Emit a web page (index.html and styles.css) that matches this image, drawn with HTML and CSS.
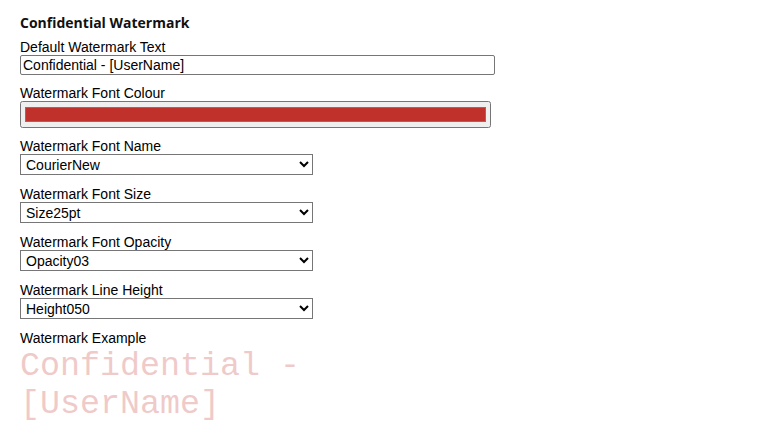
FILE: index.html
```html
<!DOCTYPE html>
<html>
<head>
<meta charset="utf-8">
<link rel="stylesheet" href="styles.css">
</head>
<body>
<div class="panel">
  <h3 class="title">Confidential Watermark</h3>
  <div class="field field-tight">
    <label class="lbl">Default Watermark Text</label>
    <input class="text-in" type="text" value="Confidential - [UserName]" spellcheck="true">
  </div>
  <div class="field field-tight">
    <label class="lbl">Watermark Font Colour</label>
    <input class="color-in" type="color" value="#c0312b">
  </div>
  <div class="field">
    <label class="lbl">Watermark Font Name</label>
    <select class="sel"><option>CourierNew</option></select>
  </div>
  <div class="field">
    <label class="lbl">Watermark Font Size</label>
    <select class="sel"><option>Size25pt</option></select>
  </div>
  <div class="field">
    <label class="lbl">Watermark Font Opacity</label>
    <select class="sel"><option>Opacity03</option></select>
  </div>
  <div class="field">
    <label class="lbl">Watermark Line Height</label>
    <select class="sel"><option>Height050</option></select>
  </div>
  <div class="field">
    <label class="lbl">Watermark Example</label>
    <div class="example">Confidential - [UserName]</div>
  </div>
</div>
</body>
</html>
```
FILE: styles.css
```css
html, body {
  margin: 0;
  padding: 0;
  background: #fff;
}
.panel {
  padding: 13px 20px 0 20px;
  font-family: "Liberation Sans", Arial, sans-serif;
  font-size: 14px;
  color: #000;
}
.title {
  font-family: "Open Sans", sans-serif;
  font-weight: 700;
  font-size: 14px;
  line-height: 20px;
  margin: 0 0 6px 0;
  color: #111;
}
.field {
  display: flex;
  flex-direction: column;
  align-items: flex-start;
  margin-bottom: 11px;
}
.field-tight {
  margin-bottom: 10px;
}
.lbl {
  display: block;
  line-height: 16px;
  height: 16px;
}
.text-in {
  box-sizing: border-box;
  width: 475px;
  height: 20px;
  margin: 0;
  padding: 0 2px;
  font-family: "Liberation Sans", Arial, sans-serif;
  font-size: 14px;
  border: 1px solid #767676;
  border-radius: 2px;
  color: #000;
}
.color-in {
  box-sizing: border-box;
  width: 471px;
  height: 27px;
  margin: 0;
}
.sel {
  box-sizing: border-box;
  width: 293px;
  height: 21px;
  margin: 0;
  padding-left: 1px;
  font-family: "Liberation Sans", Arial, sans-serif;
  font-size: 14px;
  color: #000;
  background: #fff;
}
.example {
  width: 292px;
  margin-top: 1px;
  font-family: "Liberation Mono", "Courier New", monospace;
  font-size: 33.33px;
  color: #c0312b;
  opacity: 0.25;
}
```
